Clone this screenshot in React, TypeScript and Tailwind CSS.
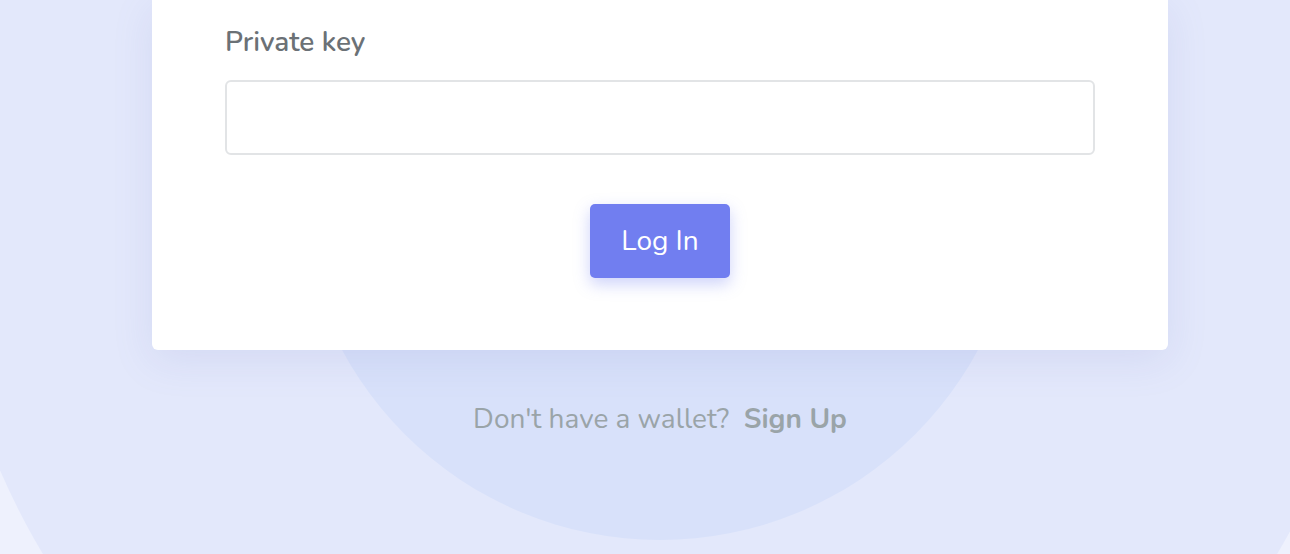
export default function App() {
  return (
    <div
      className="relative h-[554px] w-[1290px] overflow-hidden bg-[#eef1fd]"
      style={{ fontFamily: '"Nunito", "Noto Sans", "Open Sans", sans-serif' }}
    >
      <div className="absolute left-[-59px] top-[-534px] h-[1438px] w-[1438px] rounded-full bg-[#e3e8fb]" />
      <div className="absolute left-[299px] top-[-182px] h-[722px] w-[722px] rounded-full bg-[#d8e1fa]" />
      <div className="relative ml-[152px] flex w-[1016px] flex-col items-center">
        <div className="flex w-full flex-col rounded-b-[6px] bg-white px-[73px] pt-[24px] pb-[72px] shadow-[0_10px_40px_rgba(120,130,200,0.14)]">
          <label className="text-[28px] font-semibold leading-[36px] text-[#6b7176]">Private key</label>
          <input
            type="password"
            className="mt-[20px] h-[75px] w-full rounded-[6px] border-2 border-[#e2e4e6] bg-white px-4 outline-none"
          />
          <div className="mt-[49px] flex justify-center">
            <button className="h-[74px] w-[140px] rounded-[5px] bg-[#717ef0] text-[28px] text-white shadow-[0_6px_16px_rgba(113,126,240,0.35)]">
              Log In
            </button>
          </div>
        </div>
        <div className="mt-[51px] text-[28px] leading-[36px] text-[#9aa4a8]">
          Don't have a wallet?&nbsp;&nbsp;<span className="font-bold">Sign Up</span>
        </div>
      </div>
    </div>
  );
}
